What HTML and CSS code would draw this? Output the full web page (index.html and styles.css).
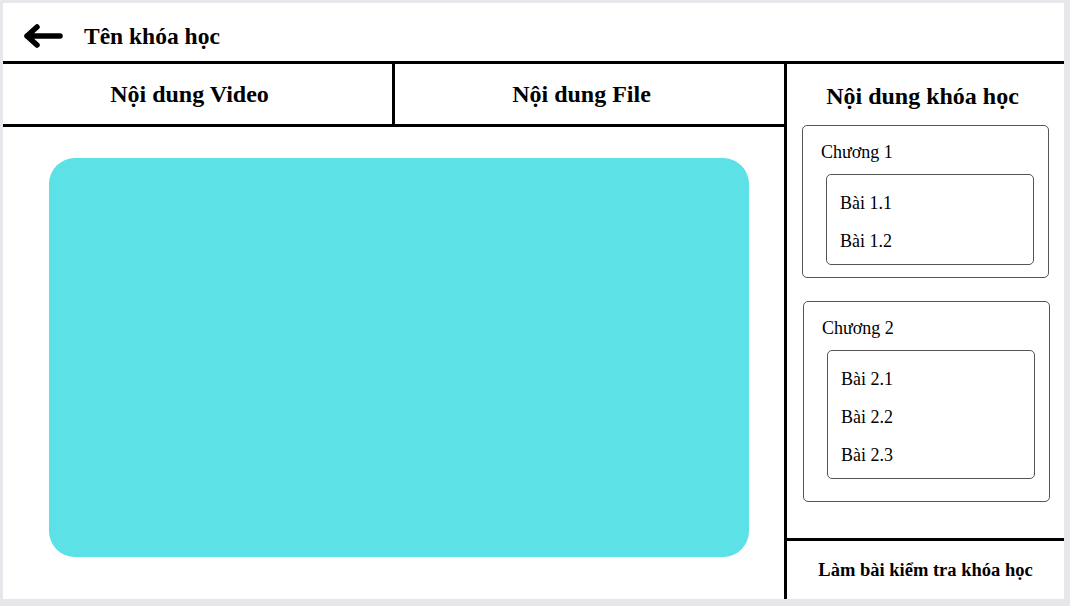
FILE: index.html
```html
<!DOCTYPE html>
<html lang="vi">
<head>
<meta charset="utf-8">
<title>Tên khóa học</title>
<link rel="stylesheet" href="styles.css">
</head>
<body>
<div class="frame">
  <header class="topbar">
    <svg class="back" width="40" height="24" viewBox="0 0 40 24" aria-hidden="true">
      <path d="M4 12 H37 M14 3 L4 12 L14 21" fill="none" stroke="#000" stroke-width="5.5" stroke-linecap="round" stroke-linejoin="round"/>
    </svg>
    <h1 class="course-title">Tên khóa học</h1>
  </header>
  <div class="main">
    <section class="content">
      <nav class="tabs">
        <div class="tab">Nội dung Video</div>
        <div class="tab">Nội dung File</div>
      </nav>
      <div class="video-wrap">
        <div class="video"></div>
      </div>
    </section>
    <aside class="sidebar">
      <h2 class="side-title">Nội dung khóa học</h2>
      <div class="chapter">
        <div class="chapter-name">Chương 1</div>
        <ul class="lessons">
          <li>Bài 1.1</li>
          <li>Bài 1.2</li>
        </ul>
      </div>
      <div class="chapter chapter-2">
        <div class="chapter-name">Chương 2</div>
        <ul class="lessons">
          <li>Bài 2.1</li>
          <li>Bài 2.2</li>
          <li>Bài 2.3</li>
        </ul>
      </div>
      <div class="spacer"></div>
      <div class="quiz">Làm bài kiểm tra khóa học</div>
    </aside>
  </div>
</div>
</body>
</html>
```

FILE: styles.css
```css
html, body {
  margin: 0;
  padding: 0;
}

body {
  background: #e5e7eb;
  padding: 3px 0 0 3px;
  font-family: "Liberation Serif", "Times New Roman", serif;
  color: #000;
  overflow: hidden;
}

.frame {
  width: 1061px;
  height: 596px;
  background: #fff;
  display: flex;
  flex-direction: column;
  overflow: hidden;
}

.topbar {
  height: 49px;
  padding: 10px 0 0 20px;
  border-bottom: 3px solid #000;
  display: flex;
  align-items: center;
  gap: 21px;
  flex-shrink: 0;
  box-sizing: content-box;
  margin-top: -1px;
}

.back {
  display: block;
  margin-top: -2px;
}

.course-title {
  margin: 0;
  font-size: 23.5px;
  font-weight: bold;
}

.main {
  flex: 1;
  display: flex;
  min-height: 0;
}

.content {
  width: 781px;
  border-right: 3px solid #000;
  display: flex;
  flex-direction: column;
}

.tabs {
  display: flex;
  height: 60px;
  border-bottom: 3px solid #000;
}

.tab {
  flex: 1;
  display: flex;
  align-items: center;
  justify-content: center;
  padding-right: 16px;
  font-size: 24px;
  font-weight: bold;
}

.tab + .tab {
  border-left: 3px solid #000;
}

.video-wrap {
  padding: 31px 0 0 46px;
}

.video {
  width: 700px;
  height: 399px;
  background: #5ce1e6;
  border-radius: 26px;
}

.sidebar {
  width: 277px;
  display: flex;
  flex-direction: column;
}

.side-title {
  margin: 0;
  height: 61px;
  box-sizing: border-box;
  padding: 4px 6px 0 0;
  display: flex;
  align-items: center;
  justify-content: center;
  font-size: 24px;
  font-weight: bold;
}

.chapter {
  margin: 0 15px;
  border: 1px solid #555;
  border-radius: 5px;
  padding: 16px 14px 12px 18px;
  font-size: 18px;
}

.chapter + .chapter {
  margin-top: 23px;
}

.chapter-2 {
  margin-left: 16px;
  margin-right: 14px;
  padding-bottom: 22px;
}

.chapter-name {
  line-height: 20px;
}

.lessons {
  list-style: none;
  margin: 12px 0 0 5px;
  padding: 9px 13px 4px;
  border: 1px solid #555;
  border-radius: 5px;
}

.lessons li {
  line-height: 38px;
}

.spacer {
  flex: 1;
}

.quiz {
  height: 58px;
  border-top: 3px solid #000;
  display: flex;
  align-items: center;
  justify-content: center;
  font-size: 18.5px;
  font-weight: bold;
}
```
